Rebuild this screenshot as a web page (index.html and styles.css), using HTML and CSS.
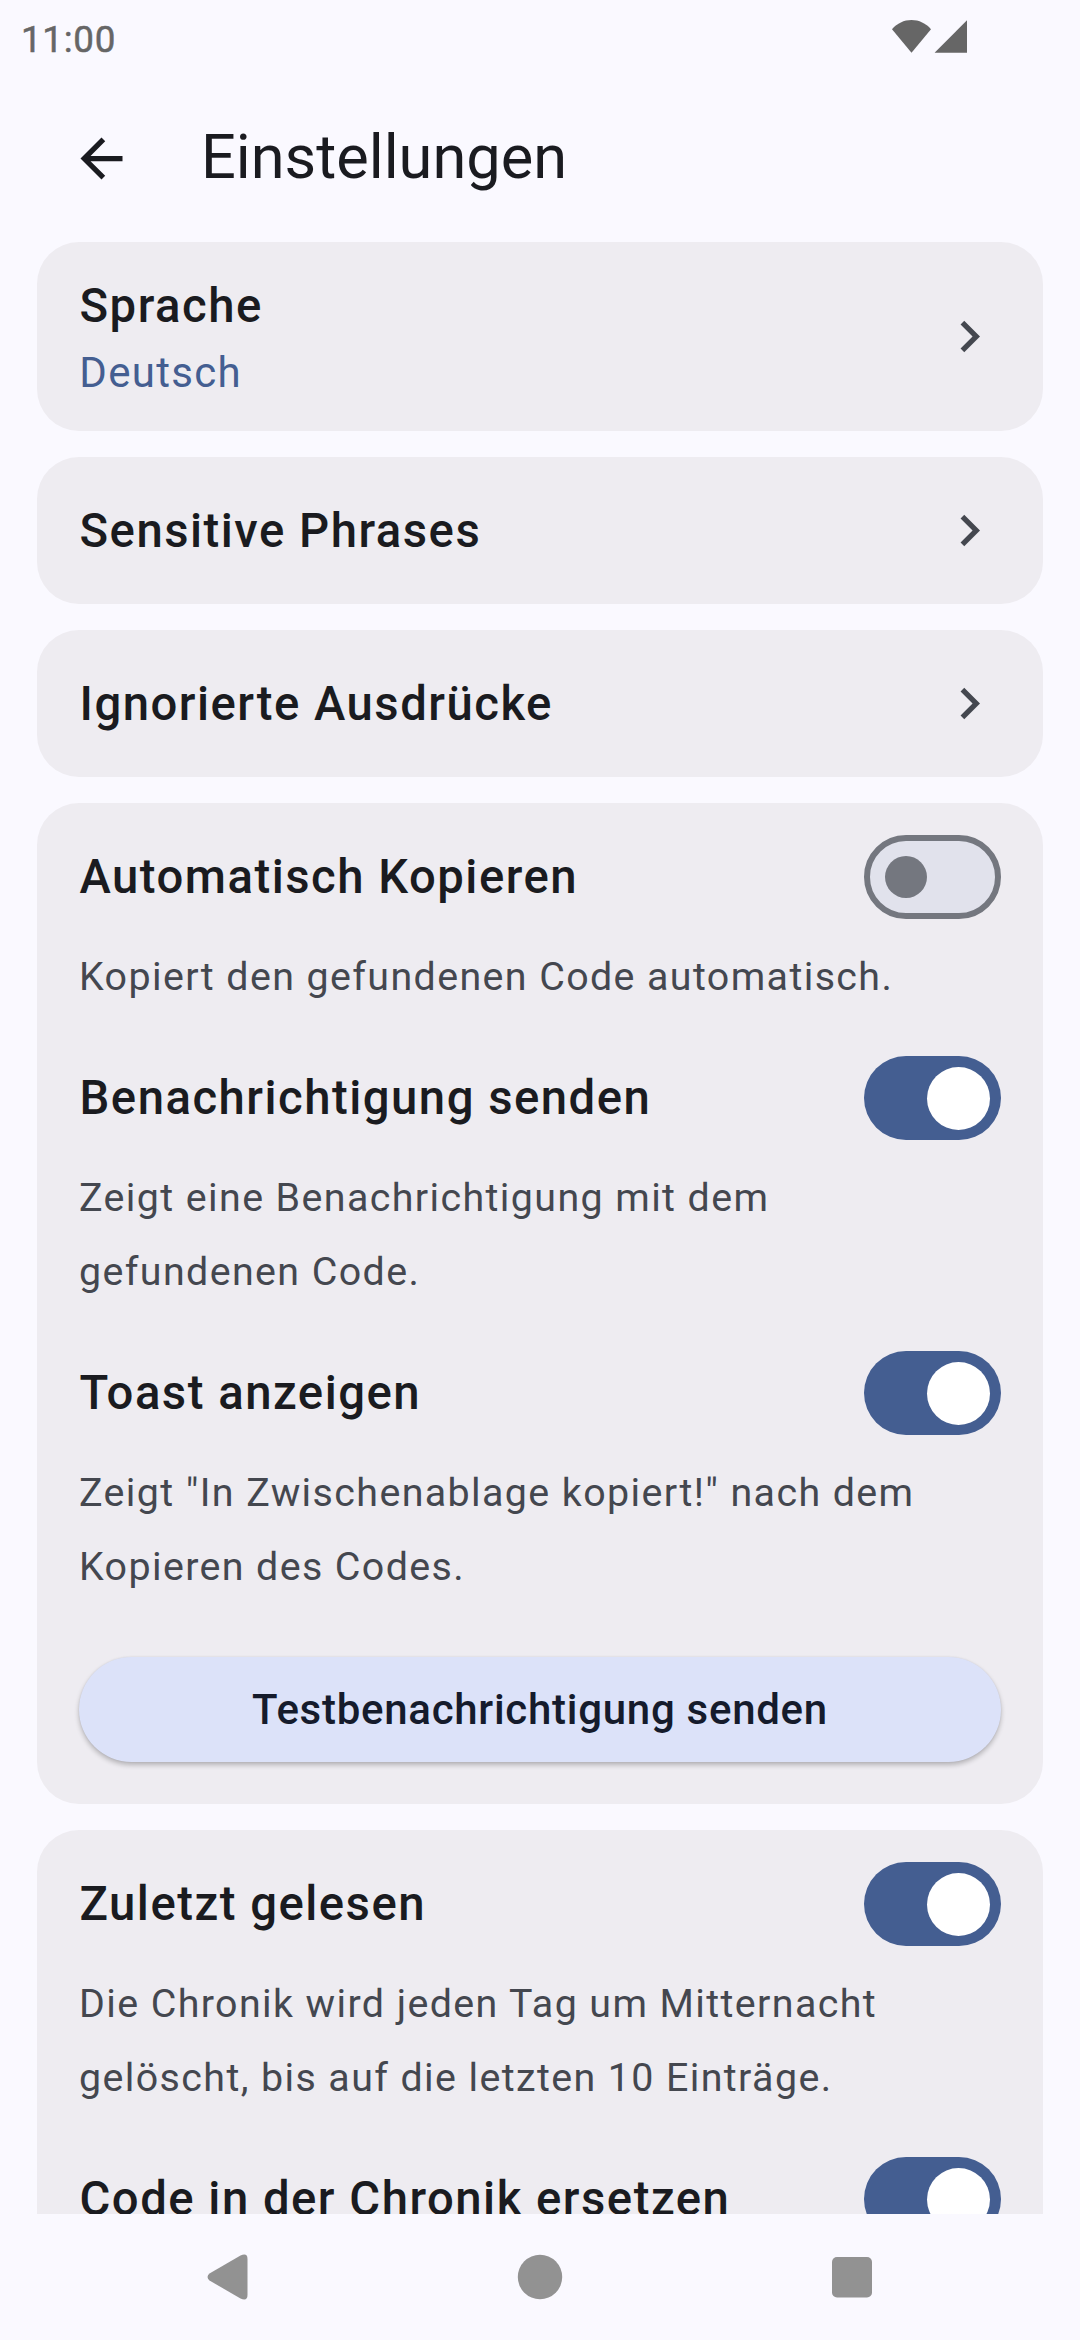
FILE: index.html
```html
<!DOCTYPE html>
<html lang="de">
<head>
<meta charset="utf-8">
<title>Einstellungen</title>
<link rel="stylesheet" href="styles.css">
</head>
<body>
<svg class="defs" width="0" height="0" aria-hidden="true">
  <symbol id="chevron" viewBox="0 0 24 24"><path d="M8.590 16.590 13.170 12 8.590 7.410 10 6l6 6-6 6z"/></symbol>
</svg>
<div class="screen">
  <div class="statusbar">
    <span class="clock">11:00</span>
    <svg class="signals" width="76" height="33" viewBox="0 0 76 33">
      <path d="M19.500 32.700 0 9.200C5.200 3.300 12 0 19.500 0S33.800 3.300 39 9.200z"/>
      <path d="M75 .3V32.700H42.600z"/>
    </svg>
  </div>
  <header class="appbar">
    <svg class="back" viewBox="0 0 24 24"><path d="M20 11H7.830l5.590-5.590L12 4l-8 8 8 8 1.410-1.410L7.830 13H20z"/></svg>
    <h1 class="heading">Einstellungen</h1>
  </header>
  <main class="content">
    <section class="card link link-tall">
      <div class="labels">
        <h2 class="title">Sprache</h2>
        <p class="value">Deutsch</p>
      </div>
      <svg class="chevron"><use href="#chevron"/></svg>
    </section>
    <section class="card link">
      <h2 class="title">Sensitive Phrases</h2>
      <svg class="chevron"><use href="#chevron"/></svg>
    </section>
    <section class="card link">
      <h2 class="title">Ignorierte Ausdrücke</h2>
      <svg class="chevron"><use href="#chevron"/></svg>
    </section>
    <section class="card group">
      <div class="setting">
        <div class="row"><h2 class="title">Automatisch Kopieren</h2><span class="switch"><span class="thumb"></span></span></div>
        <p class="desc">Kopiert den gefundenen Code automatisch.</p>
      </div>
      <div class="setting">
        <div class="row"><h2 class="title">Benachrichtigung senden</h2><span class="switch on"><span class="thumb"></span></span></div>
        <p class="desc">Zeigt eine Benachrichtigung mit dem<br>gefundenen Code.</p>
      </div>
      <div class="setting">
        <div class="row"><h2 class="title">Toast anzeigen</h2><span class="switch on"><span class="thumb"></span></span></div>
        <p class="desc">Zeigt "In Zwischenablage kopiert!" nach dem<br>Kopieren des Codes.</p>
      </div>
      <button class="button">Testbenachrichtigung senden</button>
    </section>
    <section class="card group">
      <div class="setting">
        <div class="row"><h2 class="title">Zuletzt gelesen</h2><span class="switch on"><span class="thumb"></span></span></div>
        <p class="desc">Die Chronik wird jeden Tag um Mitternacht<br>gelöscht, bis auf die letzten 10 Einträge.</p>
      </div>
      <div class="setting">
        <div class="row"><h2 class="title">Code in der Chronik ersetzen</h2><span class="switch on"><span class="thumb"></span></span></div>
      </div>
    </section>
  </main>
  <nav class="navbar">
    <svg class="navicon" viewBox="0 0 48 48"><path d="M5.500 20.500 36.500 2.500Q43.500 -.5 43.500 6V42Q43.500 48.500 36.500 45.500L5.500 27.500Q1.500 24 5.500 20.500z"/></svg>
    <svg class="navicon" viewBox="0 0 48 48"><circle cx="24" cy="24" r="22.200"/></svg>
    <svg class="navicon" viewBox="0 0 48 48"><rect x="4" y="4" width="40" height="40.500" rx="5"/></svg>
  </nav>
</div>
</body>
</html>
```
FILE: styles.css
```css
* { box-sizing: border-box; margin: 0; padding: 0; }
body { background: #faf9ff; color: #1a1b20; font-family: Roboto, sans-serif; }
.defs { display: block; }
.screen { width: 1080px; height: 2340px; display: flex; flex-direction: column; overflow: hidden; }

.statusbar { height: 74px; flex: none; display: flex; justify-content: space-between; align-items: flex-start; padding: 20px 112px 0 21px; }
.clock { font-size: 36.75px; line-height: 39px; font-weight: 400; letter-spacing: .7px; -webkit-text-stroke: .5px #666; color: #666; }
.signals { fill: #666; }

.appbar { height: 168px; flex: none; display: flex; align-items: center; gap: 68px; padding-left: 70px; }
.back { width: 63px; height: 63px; fill: #1a1b20; }
.heading { font-size: 61.3px; line-height: 74px; padding-bottom: 2px; font-weight: 400; }

.content { flex: 1; min-height: 0; overflow: hidden; display: flex; flex-direction: column; gap: 26px; padding: 0 37px; }
.card { flex: none; background: #eeecf1; border-radius: 42px; padding: 0 42px; }
.link { height: 147px; display: flex; align-items: center; justify-content: space-between; }
.link-tall { height: 189px; }
.labels { padding-top: 4px; }
.title { font-size: 47.25px; line-height: 67px; font-weight: 500; letter-spacing: 1.5px; text-indent: .5px; white-space: nowrap; }
.link > .title { padding-top: 1px; }
.value { font-size: 42px; line-height: 65px; letter-spacing: 1.3px; text-indent: .3px; color: #445e91; }
.chevron { width: 63px; height: 63px; fill: #44474f; }

.group { display: flex; flex-direction: column; gap: 21px; padding-top: 11px; padding-bottom: 42px; }
.row { height: 126px; display: flex; align-items: center; justify-content: space-between; }
.desc { font-size: 39.375px; line-height: 74px; letter-spacing: 1.4px; color: #44474f; white-space: nowrap; }

.switch { width: 137px; height: 84px; flex: none; display: flex; align-items: center; border: 6px solid #74777f; border-radius: 42px; background: #e1e2ec; padding-left: 15px; }
.switch .thumb { width: 42px; height: 42px; border-radius: 50%; background: #74777f; }
.switch.on { border: 0; background: #445e91; justify-content: flex-end; padding: 0 11px 0 0; }
.switch.on .thumb { width: 63px; height: 63px; background: #fff; }

.button { height: 105px; margin-top: 32px; border: 0; border-radius: 53px; background: #dce2f9; color: #151b2c; font: 500 42px/60px Roboto, sans-serif; letter-spacing: .72px; box-shadow: 0 3px 5px rgba(0, 0, 0, .24), 0 0 2px rgba(0, 0, 0, .08); }

.navbar { height: 126px; flex: none; display: flex; align-items: center; justify-content: space-between; padding: 0 204px; }
.navicon { width: 48px; height: 48px; fill: #929292; }
```
